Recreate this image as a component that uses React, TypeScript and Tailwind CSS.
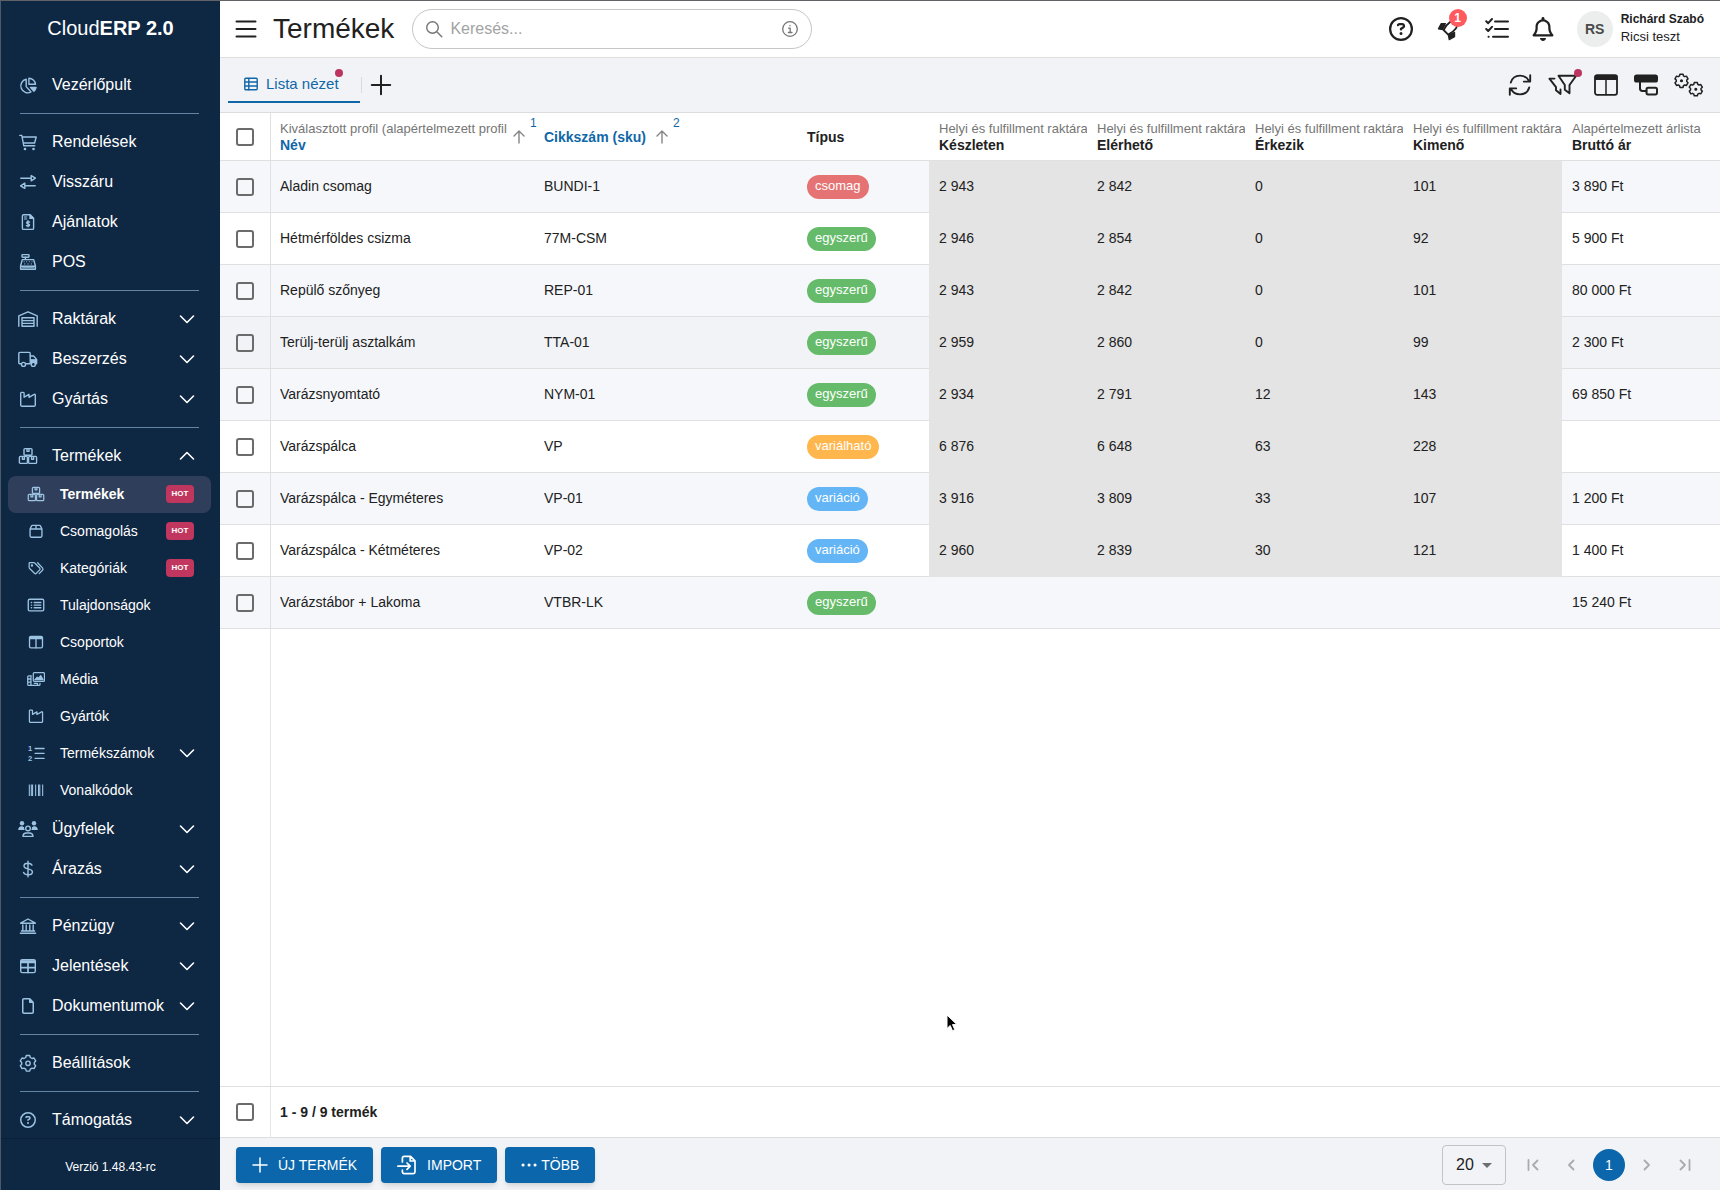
import type { ReactNode } from 'react';
import { FaRegBell, FaRegCircleQuestion, FaRegFile } from 'react-icons/fa6';

const Svg = ({ children, className = 'w-5 h-5', viewBox = '0 0 20 20', width = 1.4 }: { children: ReactNode; className?: string; viewBox?: string; width?: number }) => (
  <svg
    viewBox={viewBox}
    className={`shrink-0 ${className}`}
    fill="none"
    stroke="currentColor"
    strokeWidth={width}
    strokeLinecap="round"
    strokeLinejoin="round"
    aria-hidden="true"
  >
    {children}
  </svg>
);

// toothed ring around a centre point
const gearPath = (cx: number, cy: number, outer: number, inner: number, teeth: number) => {
  const points: string[] = [];
  for (let i = 0; i < teeth; i++) {
    [[-0.22, outer], [0.22, outer], [0.36, inner], [0.64, inner]].forEach(([offset, r]) => {
      const angle = ((i + offset) / teeth) * Math.PI * 2 - Math.PI / 2;
      points.push(`${(cx + r * Math.cos(angle)).toFixed(2)} ${(cy + r * Math.sin(angle)).toFixed(2)}`);
    });
  }
  return `M${points.join('L')}z`;
};

const icons = {
  pie: (
    <Svg>
      <path d="M8.2 4.2A6.9 6.9 0 1 0 13 17L8.2 11.6z" />
      <path d="M10.9 3.2v6h6.6a6.6 6.6 0 0 0-6.6-6z" />
      <path d="M12.4 12.4h5.7a7 7 0 0 1-2.2 3.8z" fill="currentColor" />
    </Svg>
  ),
  cart: (
    <Svg>
      <path d="M1.8 3.4h2l2 10.4h11M4.4 5h13.8l-1.6 6H5.4" />
      <circle cx="7" cy="17" r="1.3" fill="currentColor" stroke="none" />
      <circle cx="15.5" cy="17" r="1.3" fill="currentColor" stroke="none" />
    </Svg>
  ),
  returns: (
    <Svg>
      <path d="M2.8 6.2h10.4M13.2 3.6v5.2l4.2-2.6zM17.2 13.8H6.8M6.8 11.2v5.2l-4.2-2.6z" />
    </Svg>
  ),
  invoice: (
    <Svg>
      <path d="M5.6 2.8h6.6l3.4 3.4v10a1.2 1.2 0 0 1-1.2 1.2H5.6a1.2 1.2 0 0 1-1.2-1.2V4a1.2 1.2 0 0 1 1.2-1.2z" />
      <path d="M6.4 5h2.4M6.4 7h2.4" strokeWidth="1" />
      <path d="M11.6 10.1c-.4-.5-3-.8-3 .6 0 1.5 3 .8 3 2.3 0 1.4-2.6 1.2-3.2.5M10 8.8v6" />
      <path d="M12 3v3.4h3.4z" fill="currentColor" />
    </Svg>
  ),
  register: (
    <Svg>
      <rect x="4" y="2.6" width="7" height="2.6" rx=".6" />
      <path d="M7.4 5.2v2.2M4.3 7.6h11.4l1.7 6.2v3.4H2.6v-3.4zM2.8 14.2h14.4" />
      <path d="M6 9.7h.1M8.6 9.7h.1M11.3 9.7h.1M14 9.7h.1M6.8 11.9h.1M10 11.9h.1M13.2 11.9h.1M4 15.8h12" strokeWidth="1.1" />
    </Svg>
  ),
  warehouse: (
    <Svg>
      <path d="M.8 17.3V6.9L10 2.8l9.2 4.1v10.4M4 17.3V8.8h12v8.5zM4 11.6h12M4 14.4h12" />
    </Svg>
  ),
  truck: (
    <Svg>
      <path d="M3.4 14.8H1.8a1 1 0 0 1-1-1V4.4a1 1 0 0 1 1-1h9.4a1 1 0 0 1 1 1v10.4H7.8" />
      <path d="M12.2 7h3.4l3 3.4v4.4h-1M12.8 11h5.6v3.2" />
      <path d="M13 11.2h5.4v2.6l-2.8-1-2.6 1.4z" fill="currentColor" />
      <circle cx="5.5" cy="15.4" r="2" />
      <circle cx="15.3" cy="15.4" r="2" />
    </Svg>
  ),
  factory: (
    <Svg>
      <path d="M2.7 16V4.2a.8.8 0 0 1 .8-.8h1.8a.8.8 0 0 1 .8.8v4L11 5.4v2.9l5.2-2.9a.7.7 0 0 1 1.1.6v10a1.2 1.2 0 0 1-1.2 1.2H3.9A1.2 1.2 0 0 1 2.7 16z" />
    </Svg>
  ),
  boxes: (
    <Svg>
      <rect x="6" y="2.6" width="8" height="6.6" rx="1" />
      <rect x="1.4" y="10.4" width="8" height="7" rx="1" />
      <rect x="10.6" y="10.4" width="8" height="7" rx="1" />
      <path d="M9 2.8v2.6h2V2.8M4.4 10.6v2.6h2v-2.6M13.6 10.6v2.6h2v-2.6" />
    </Svg>
  ),
  box: (
    <Svg width={1.5}>
      <path d="M3.4 7.8h13.2v7.6a1.5 1.5 0 0 1-1.5 1.5H4.9a1.5 1.5 0 0 1-1.5-1.5zM3.4 7.8l1.7-3.5a1.2 1.2 0 0 1 1-.6h7.8a1.2 1.2 0 0 1 1 .6l1.7 3.5M10 3.8v4" />
    </Svg>
  ),
  tags: (
    <Svg>
      <path d="M2.4 4.8v4.6a1.5 1.5 0 0 0 .5 1.1l5.4 5.4a1.5 1.5 0 0 0 2.1 0l3.7-3.8a1.5 1.5 0 0 0 0-2.1L8.6 4.5a1.5 1.5 0 0 0-1.1-.5H3.2a.8.8 0 0 0-.8.8z" />
      <path d="M11.8 4.2l5.4 5.6a2 2 0 0 1 0 2.7l-3.6 3.7" />
      <circle cx="5.5" cy="7.2" r=".6" fill="currentColor" />
    </Svg>
  ),
  listBox: (
    <Svg width={1.5}>
      <rect x="1.4" y="3.6" width="17.2" height="13" rx="1.6" />
      <path d="M8 7.2h7.4M8 10.1h7.4M8 13h7.4M4.8 7.2h.3M4.8 10.1h.3M4.8 13h.3" />
    </Svg>
  ),
  columns: (
    <Svg width={1.5}>
      <rect x="2.8" y="3.8" width="14.4" height="12.8" rx="1.6" />
      <path d="M3 5h14M3 6.2h14M10 6.4v10" />
    </Svg>
  ),
  media: (
    <Svg>
      <rect x="7" y="2.8" width="12.4" height="9.8" rx="1.2" />
      <path d="M8.8 10.8l2.6-2.8 1.4 1.4 2.4-3.2 2.6 4.6z" fill="currentColor" />
      <path d="M4.8 6.4H2a1.2 1.2 0 0 0-1.2 1.2V16A1.2 1.2 0 0 0 2 17.2h11.2a1.2 1.2 0 0 0 1.2-1.2v-1.2M4.4 6.4V17M1 10h3M1 13.6h3M8 14.8h3.6v2.4" />
    </Svg>
  ),
  numbers: (
    <Svg>
      <path d="M9 5h10M9 10.5h10M9 16h10" />
      <text x="1" y="8" fontSize="8.5" fontWeight="700" fill="currentColor" stroke="none">1</text>
      <text x="1" y="18.5" fontSize="8.5" fontWeight="700" fill="currentColor" stroke="none">2</text>
    </Svg>
  ),
  barcode: (
    <Svg width={1.2}>
      <path d="M2.6 3.8v13M4.8 3.8v13M6.2 3.8v13M9.6 3.8v13M12.8 3.8v13M14.2 3.8v13M17.4 3.8v13" strokeLinecap="butt" />
    </Svg>
  ),
  users: (
    <Svg>
      <g fill="currentColor" stroke="none">
        <circle cx="4" cy="4.2" r="2.2" />
        <circle cx="16" cy="4.2" r="2.2" />
        <path d="M.2 11c0-2.200 1.400-3.800 3.200-3.800 1 0 2.200.3 2.800 1.200-.2 1 0 1.800.6 2.600zM19.800 11c0-2.200-1.400-3.800-3.200-3.800-1 0-2.200.3-2.800 1.200.2 1 0 1.800-.6 2.600z" />
      </g>
      <circle cx="10" cy="9.400" r="2.300" />
      <path d="M5 17.400c0-2.200 1.600-3.400 3.600-3.400h2.800c2 0 3.600 1.200 3.600 3.400z" />
    </Svg>
  ),
  dollar: (
    <Svg>
      <path d="M10 2.200v15.600M14 6.200C13.200 4.700 11.800 4.200 10 4.200 7.800 4.200 6 5.100 6 6.900c0 4 8.400 1.900 8.400 6.100 0 1.900-2 2.800-4.200 2.800-2.300 0-3.900-.8-4.600-2.300" />
    </Svg>
  ),
  bank: (
    <Svg>
      <path d="M2.600 7.200L10 3l7.400 4.200zM4.800 9v5.400M8.200 9v5.400M11.800 9v5.400M15.200 9v5.400M3.400 15h13.200M2.400 17.300h15.200" />
    </Svg>
  ),
  report: (
    <Svg>
      <rect x="2.700" y="3.800" width="14.600" height="12.800" rx="1.600" />
      <path d="M3 5h14M3 6.400h14M3 11.700h14M10 7v9.400" strokeWidth="1.700" />
    </Svg>
  ),
  file: <FaRegFile className="h-4 w-5 shrink-0" />,
  gear: (
    <Svg>
      <path d="M8.300 2.500h3.400l.6 2 1.700 1 2-.5 1.700 2.900-1.400 1.500v1.800l1.400 1.500-1.700 2.900-2-.5-1.700 1-.6 2H8.300l-.6-2-1.700-1-2 .5-1.700-2.900 1.400-1.500V9.400L2.300 7.900 4 5l2 .5 1.700-1z" />
      <circle cx="10" cy="10.300" r="2.200" />
    </Svg>
  ),
  help: <FaRegCircleQuestion className="h-4 w-5 shrink-0" />,
};

type MenuItem = { label: string; icon: keyof typeof icons; chevron?: 'down' | 'up'; hot?: boolean; active?: boolean; children?: MenuItem[] };

const menu: MenuItem[][] = [
  [{ label: 'Vezérlőpult', icon: 'pie' }],
  [
    { label: 'Rendelések', icon: 'cart' },
    { label: 'Visszáru', icon: 'returns' },
    { label: 'Ajánlatok', icon: 'invoice' },
    { label: 'POS', icon: 'register' },
  ],
  [
    { label: 'Raktárak', icon: 'warehouse', chevron: 'down' },
    { label: 'Beszerzés', icon: 'truck', chevron: 'down' },
    { label: 'Gyártás', icon: 'factory', chevron: 'down' },
  ],
  [
    {
      label: 'Termékek',
      icon: 'boxes',
      chevron: 'up',
      children: [
        { label: 'Termékek', icon: 'boxes', hot: true, active: true },
        { label: 'Csomagolás', icon: 'box', hot: true },
        { label: 'Kategóriák', icon: 'tags', hot: true },
        { label: 'Tulajdonságok', icon: 'listBox' },
        { label: 'Csoportok', icon: 'columns' },
        { label: 'Média', icon: 'media' },
        { label: 'Gyártók', icon: 'factory' },
        { label: 'Termékszámok', icon: 'numbers', chevron: 'down' },
        { label: 'Vonalkódok', icon: 'barcode' },
      ],
    },
    { label: 'Ügyfelek', icon: 'users', chevron: 'down' },
    { label: 'Árazás', icon: 'dollar', chevron: 'down' },
  ],
  [
    { label: 'Pénzügy', icon: 'bank', chevron: 'down' },
    { label: 'Jelentések', icon: 'report', chevron: 'down' },
    { label: 'Dokumentumok', icon: 'file', chevron: 'down' },
  ],
  [{ label: 'Beállítások', icon: 'gear' }],
  [{ label: 'Támogatás', icon: 'help', chevron: 'down' }],
];

const pillColors = {
  csomag: 'bg-[#e57373]',
  egyszerű: 'bg-[#66bb6a]',
  variálható: 'bg-[#ffb74d]',
  variáció: 'bg-[#64b5f6]',
};

type Product = { name: string; sku: string; type: keyof typeof pillColors; stock: string[]; price: string; hover?: boolean };

const products: Product[] = [
  { name: 'Aladin csomag', sku: 'BUNDI-1', type: 'csomag', stock: ['2 943', '2 842', '0', '101'], price: '3 890 Ft' },
  { name: 'Hétmérföldes csizma', sku: '77M-CSM', type: 'egyszerű', stock: ['2 946', '2 854', '0', '92'], price: '5 900 Ft' },
  { name: 'Repülő szőnyeg', sku: 'REP-01', type: 'egyszerű', stock: ['2 943', '2 842', '0', '101'], price: '80 000 Ft' },
  { name: 'Terülj-terülj asztalkám', sku: 'TTA-01', type: 'egyszerű', stock: ['2 959', '2 860', '0', '99'], price: '2 300 Ft', hover: true },
  { name: 'Varázsnyomtató', sku: 'NYM-01', type: 'egyszerű', stock: ['2 934', '2 791', '12', '143'], price: '69 850 Ft' },
  { name: 'Varázspálca', sku: 'VP', type: 'variálható', stock: ['6 876', '6 648', '63', '228'], price: '' },
  { name: 'Varázspálca - Egyméteres', sku: 'VP-01', type: 'variáció', stock: ['3 916', '3 809', '33', '107'], price: '1 200 Ft' },
  { name: 'Varázspálca - Kétméteres', sku: 'VP-02', type: 'variáció', stock: ['2 960', '2 839', '30', '121'], price: '1 400 Ft' },
  { name: 'Varázstábor + Lakoma', sku: 'VTBR-LK', type: 'egyszerű', stock: [], price: '15 240 Ft' },
];

const stockColumns = ['Készleten', 'Elérhető', 'Érkezik', 'Kimenő'];

const Chevron = ({ dir }: { dir: 'down' | 'up' }) => (
  <Svg className="w-4 h-4 text-white" viewBox="0 0 16 16" width={1.6}>
    <path d={dir === 'down' ? 'M1.5 5L8 11.5 14.5 5' : 'M1.5 11L8 4.5 14.5 11'} />
  </Svg>
);

function NavItem({ item, sub }: { item: MenuItem; sub?: boolean }) {
  return (
    <li>
      <a
        href="#"
        className={`ml-[7px] mr-[9px] flex items-center pr-4 ${sub ? 'h-[37px] rounded-lg pb-0.5 pl-[19px] text-sm' : 'h-10 pl-[10px] text-base'} ${item.active ? 'bg-[#2f3f5b] font-bold' : ''}`}
      >
        <span className={`flex justify-center text-[#9cc3e2] ${sub ? 'mr-[15px] w-[18px] [&>svg]:h-[18px] [&>svg]:w-[18px]' : 'mr-[14px] w-5'}`}>{icons[item.icon]}</span>
        <span className="flex-1 whitespace-nowrap">{item.label}</span>
        {item.hot && <span className="mr-px flex h-[18px] w-7 items-center justify-center rounded bg-[#c0365f] text-[8px] font-bold">HOT</span>}
        {item.chevron && <Chevron dir={item.chevron} />}
      </a>
      {item.children && (
        <ul>
          {item.children.map((child) => (
            <NavItem key={child.label} item={child} sub />
          ))}
        </ul>
      )}
    </li>
  );
}

function Sidebar() {
  return (
    <aside className="sticky top-0 flex h-[calc(100vh-1px)] w-[219px] shrink-0 flex-col bg-[#0e2743] text-white">
      <div className="flex h-16 shrink-0 items-center justify-center pb-[10px] text-xl">
        <span>
          Cloud<b>ERP 2.0</b>
        </span>
      </div>
      <nav className="min-h-0 flex-1 overflow-hidden">
        {menu.map((group, idx) => (
          <ul key={idx} className={idx > 0 ? 'before:my-2 before:ml-[19px] before:mr-[21px] before:block before:h-px before:bg-[#6384a3]' : ''}>
            {group.map((item) => (
              <NavItem key={item.label} item={item} />
            ))}
          </ul>
        ))}
      </nav>
      <div className="flex h-[52px] shrink-0 items-center justify-center border-t border-[#0b2038] pt-1 text-xs">Verzió 1.48.43-rc</div>
    </aside>
  );
}

const IconButton = ({ label, children, className = '' }: { label: string; children: ReactNode; className?: string }) => (
  <button type="button" aria-label={label} className={`relative flex shrink-0 items-center justify-center ${className}`}>
    {children}
  </button>
);

function Header() {
  return (
    <header className="flex h-[57px] shrink-0 items-center border-b border-[#dfdfdf] bg-white pl-[14px] pr-4">
      <IconButton label="Menü" className="mr-[15px]">
        <Svg className="h-6 w-6" viewBox="0 0 24 24" width={2}>
          <path d="M2.5 4.5h19M2.5 12h19M2.5 19.5h19" />
        </Svg>
      </IconButton>
      <h1 className="text-[28px] leading-9">Termékek</h1>
      <div className="ml-[18px] flex h-10 w-[400px] items-center rounded-full border border-[#c6c6c6] px-3">
        <Svg className="h-[18px] w-[18px] text-[#757575]" viewBox="0 0 18 18" width={1.4}>
          <circle cx="7.5" cy="7.5" r="5.8" />
          <path d="M12 12l4.8 4.8" />
        </Svg>
        <input aria-label="Keresés" placeholder="Keresés..." className="ml-[7px] min-w-0 flex-1 bg-transparent text-base outline-none placeholder:text-[#a3a3a3]" />
        <Svg className="h-[18px] w-[18px] text-[#757575]" viewBox="0 0 18 18" width={1.3}>
          <circle cx="9" cy="9" r="7.3" />
          <path d="M7.6 8.2H9.2v4.2M7.4 12.5H11M9 5.4v.3" />
        </Svg>
      </div>
      <div className="ml-auto flex items-center">
        <IconButton label="Súgó" className="mr-6">
          <FaRegCircleQuestion className="h-6 w-6" />
        </IconButton>
        <IconButton label="Újdonságok" className="mr-6">
          <Svg className="h-6 w-6" viewBox="0 0 24 24" width={1.8}>
            <path d="M6.6 13C9.600 6.800 14.500 2.500 22 2c-.4 7.500-4.500 12.500-10.800 15.600z" />
            <path d="M8.400 6.600H4.200L1.400 11.800l4.200.8zM17.600 15.400v4.400l-5.400 2.800-.8-4.200z" fill="currentColor" strokeWidth="1.200" />
          </Svg>
          <span className="absolute -top-2 -right-1.5 flex h-[18px] w-[18px] items-center justify-center rounded-full bg-[#ff5a5f] text-xs font-bold text-white">1</span>
        </IconButton>
        <IconButton label="Feladatok" className="mr-[22px]">
          <Svg className="h-6 w-6" viewBox="0 0 24 24" width={2}>
            <path d="M10 4.5h13M10 12h13M8 19.8h15M1.2 4.2l2 2L7 2M1.2 12l2 2L7 9.8M3.5 19.8h.2" />
          </Svg>
        </IconButton>
        <IconButton label="Értesítések" className="mr-[22px]">
          <FaRegBell className="h-6 w-6" />
        </IconButton>
        <span className="flex h-9 w-9 items-center justify-center rounded-full bg-[#eceeed] text-sm font-bold text-[#4a4a4a]">RS</span>
        <div className="ml-2 pb-0.5 whitespace-nowrap">
          <div className="text-xs leading-[18px] font-bold">Richárd Szabó</div>
          <div className="text-[13px] leading-[18px]">Ricsi teszt</div>
        </div>
      </div>
    </header>
  );
}

function Toolbar() {
  return (
    <div className="flex h-[55px] shrink-0 items-center justify-between border-b border-[#dcdcdc] bg-[#f1f3f7] pl-2 pr-4">
      <div className="flex items-center">
        <button type="button" className="relative flex h-9 items-center border-b-2 border-[#1067a8] pr-[21px] pl-4 text-[15px] whitespace-nowrap text-[#1067a8]">
          <Svg className="mr-2 h-[14px] w-[14px]" viewBox="0 0 14 14">
            <rect x=".8" y="1.2" width="12.4" height="11.6" rx="1" />
            <path d="M1 5h12M1 9h12M4.8 1.4v11.4" />
          </Svg>
          Lista nézet
          <span className="absolute top-0.5 right-[17px] h-2 w-2 rounded-full bg-[#bb3560]" />
        </button>
        <span className="ml-px h-4 w-px bg-[#d8dadd]" />
        <IconButton label="Új nézet" className="ml-[7px]">
          <Svg className="h-6 w-6" viewBox="0 0 24 24" width={2}>
            <path d="M12 2.8v18.4M2.8 12h18.4" />
          </Svg>
        </IconButton>
      </div>
      <div className="flex items-center gap-4">
        <IconButton label="Frissítés">
          <Svg className="h-6 w-6" viewBox="0 0 24 24" width={1.9}>
            <path d="M2.8 9.6C4 5.2 7.4 2.6 12 2.6c4 0 7.2 2 9 5.4M22.2 2.2v6.4h-6.4M21.2 14.4c-1.200 4.400-4.600 7-9.200 7-4 0-7.200-2-9-5.400M1.800 21.800v-6.400h6.400" />
          </Svg>
        </IconButton>
        <IconButton label="Szűrők">
          <Svg className="h-6 w-[30px]" viewBox="0 0 30 24" width={1.9}>
            <path d="M10.5 2.7h17.7L21.500 12v8.300l-4.700-3.500V12zM6.500 5.600H1.400L8 14.200v3l4.500 3.800v-4.600" />
          </Svg>
          <span className="absolute -top-1 -right-1 h-2 w-2 rounded-full bg-[#bb3560]" />
        </IconButton>
        <IconButton label="Oszlopok">
          <Svg className="h-6 w-6" viewBox="0 0 24 24" width={1.8}>
            <rect x="1" y="2.2" width="22" height="19.6" rx="2" />
            <path d="M12 6v15.5" strokeWidth="1.5" />
            <path d="M1.5 3h21v3h-21z" fill="currentColor" />
          </Svg>
        </IconButton>
        <IconButton label="Csoportosítás">
          <Svg className="h-6 w-6" viewBox="0 0 24 24" width={2}>
            <rect x="1" y="2.5" width="22" height="6" rx="1.6" fill="currentColor" />
            <rect x="12.5" y="14.8" width="10.5" height="6.6" rx="1.6" />
            <path d="M6 9v6.5c0 1.6.8 2.4 2.4 2.4h4" />
          </Svg>
        </IconButton>
        <IconButton label="Beállítások">
          <Svg className="h-6 w-[30px]" viewBox="0 0 30 24" width={1.5}>
            <path d={gearPath(7.5, 7.8, 6.8, 5.3, 6)} />
            <path d={gearPath(21.8, 16.2, 6.8, 5.3, 6)} />
            <circle cx="7.5" cy="7.8" r=".8" fill="currentColor" />
            <circle cx="21.8" cy="16.2" r=".8" fill="currentColor" />
          </Svg>
        </IconButton>
      </div>
    </div>
  );
}

const Checkbox = ({ label }: { label: string }) => (
  <input type="checkbox" aria-label={label} className="block h-[18px] w-[18px] shrink-0 appearance-none rounded-[3px] border-2 border-[#6b6b6b] bg-transparent" />
);

const SortArrow = () => (
  <Svg className="h-4 w-4 text-[#858585]" viewBox="0 0 16 16">
    <path d="M8 14V2M3 7l5-5 5 5" />
  </Svg>
);

const HeadLabel = ({ caption, title, blue }: { caption: string; title: string; blue?: boolean }) => (
  <span className="block min-w-0 overflow-hidden whitespace-nowrap">
    <span className="block text-[13px] leading-4 font-normal text-[#757575]">{caption}</span>
    <span className={`block text-sm leading-4 ${blue ? 'text-[#1067a8]' : ''}`}>{title}</span>
  </span>
);

function ProductTable() {
  return (
    <table className="w-full table-fixed border-separate border-spacing-0 text-sm text-[#212121]">
      <colgroup>
        <col className="w-[51px]" />
        <col className="w-[263px]" />
        <col className="w-[264px]" />
        <col className="w-[131px]" />
        <col className="w-[158px]" />
        <col className="w-[158px]" />
        <col className="w-[158px]" />
        <col className="w-[159px]" />
        <col />
      </colgroup>
      <thead>
        <tr className="h-12 text-left *:border-b *:border-[#e0e0e0]">
          <th className="border-r pl-4">
            <Checkbox label="Összes kijelölése" />
          </th>
          <th className="pl-[9px] align-middle">
            <span className="flex items-center">
              <span className="w-[227px] shrink-0">
                <HeadLabel caption="Kiválasztott profil (alapértelmezett profil" title="Név" blue />
              </span>
              <span className="ml-1">
                <SortArrow />
              </span>
              <sup className="mb-4 ml-[3px] text-xs font-normal text-[#1067a8]">1</sup>
            </span>
          </th>
          <th className="pl-[10px]">
            <span className="flex items-center text-[#1067a8]">
              Cikkszám (sku)
              <span className="ml-2">
                <SortArrow />
              </span>
              <sup className="mb-4 ml-[3px] text-xs font-normal">2</sup>
            </span>
          </th>
          <th className="pl-[9px]">Típus</th>
          {stockColumns.map((title) => (
            <th key={title} className="pl-[10px]">
              <HeadLabel caption="Helyi és fulfillment raktára" title={title} />
            </th>
          ))}
          <th className="pl-[10px]">
            <HeadLabel caption="Alapértelmezett árlista" title="Bruttó ár" />
          </th>
        </tr>
      </thead>
      <tbody>
        {products.map((product, idx) => (
          <tr
            key={product.name}
            className={`h-[52px] [&>td]:border-b ${product.hover ? 'bg-[#f1f3f6]' : idx % 2 === 0 ? 'bg-[#f5f7fb]' : 'bg-white'}`}
          >
            <td className="border-r border-[#e0e0e0] pl-4">
              <Checkbox label={product.name} />
            </td>
            <td className="border-[#e0e0e0] pb-px pl-[9px]">{product.name}</td>
            <td className="border-[#e0e0e0] pb-px pl-[10px]">{product.sku}</td>
            <td className="border-[#e0e0e0] pl-[9px]">
              <span className={`flex h-6 w-fit items-center rounded-full px-2 text-[13px] text-white ${pillColors[product.type]}`}>{product.type}</span>
            </td>
            {stockColumns.map((title, i) => (
              <td key={title} className={`pb-px pl-[10px] ${product.stock.length ? 'border-[#e4e4e4] bg-[#e4e4e4]' : 'border-[#e0e0e0]'}`}>
                {product.stock[i]}
              </td>
            ))}
            <td className="border-[#e0e0e0] pb-px pl-[10px]">{product.price}</td>
          </tr>
        ))}
      </tbody>
    </table>
  );
}

const primaryButton = 'flex h-9 items-center rounded bg-[#0b66ab] px-4 text-sm whitespace-nowrap text-white shadow-md';

function ActionBar() {
  return (
    <footer className="flex h-[53px] shrink-0 items-center justify-between border-t border-[#dcdee1] bg-[#f1f3f7] pr-[19px] pl-4 pt-0.5">
      <div className="flex gap-2">
        <button type="button" className={primaryButton}>
          <Svg className="mr-[10px] h-4 w-4" viewBox="0 0 16 16" width={1.5}>
            <path d="M8 1v14M1 8h14" />
          </Svg>
          ÚJ TERMÉK
        </button>
        <button type="button" className={primaryButton}>
          <Svg className="mr-[10px] h-5 w-5" width={1.7}>
            <path d="M5.4 7V3A1.6 1.6 0 0 1 7 1.4h6.6L18 5.8V17a1.6 1.6 0 0 1-1.6 1.6H7A1.6 1.6 0 0 1 5.4 17v-1.8M.9 11.2h12M10 8l3.2 3.2-3.2 3.2M13.2 1.6V6h4.6" />
          </Svg>
          IMPORT
        </button>
        <button type="button" className={primaryButton}>
          <Svg className="mr-1 h-4 w-4" viewBox="0 0 16 16" width={3}>
            <path d="M2 8h.1M8 8h.1M14 8h.1" />
          </Svg>
          TÖBB
        </button>
      </div>
      <div className="flex items-center">
        <div className="relative mr-[11px]">
          <select aria-label="Sorok száma" className="h-10 w-16 appearance-none rounded border border-[#c1c3c6] bg-transparent pl-[13px] text-base">
            <option>20</option>
          </select>
          <svg viewBox="0 0 10 5" className="pointer-events-none absolute right-[14px] top-[18px] h-[5px] w-[10px] text-[#6f6f6f]" aria-hidden="true">
            <path d="M0 0h10L5 5z" fill="currentColor" />
          </svg>
        </div>
        <nav aria-label="Lapozás" className="flex gap-1.5 *:flex *:h-8 *:w-8 *:items-center *:justify-center *:rounded-full">
          <button type="button" aria-label="Első oldal" className="text-[#a9abae]">
            <Svg className="h-3 w-3" viewBox="0 0 12 12" width={1.8}>
              <path d="M1.5 1v10M10.5 1.5L6 6l4.5 4.5" />
            </Svg>
          </button>
          <button type="button" aria-label="Előző oldal" className="text-[#a9abae]">
            <Svg className="h-3 w-3" viewBox="0 0 12 12" width={1.8}>
              <path d="M8.5 1.5L4 6l4.5 4.5" />
            </Svg>
          </button>
          <button type="button" className="bg-[#0b66ab] text-sm text-white">
            1
          </button>
          <button type="button" aria-label="Következő oldal" className="text-[#a9abae]">
            <Svg className="h-3 w-3" viewBox="0 0 12 12" width={1.8}>
              <path d="M3.5 1.5L8 6l-4.5 4.5" />
            </Svg>
          </button>
          <button type="button" aria-label="Utolsó oldal" className="text-[#a9abae]">
            <Svg className="h-3 w-3" viewBox="0 0 12 12" width={1.8}>
              <path d="M1.5 1.5L6 6l-4.5 4.5M10.5 1v10" />
            </Svg>
          </button>
        </nav>
      </div>
    </footer>
  );
}

export default function App() {
  return (
    <div className="relative flex min-h-screen border-t border-l border-t-[#626266] border-l-[#4a5a6c] bg-white font-['Liberation_Sans',Arial,sans-serif] text-[#212121]">
      <Sidebar />
      <main className="flex min-w-0 flex-1 flex-col">
        <Header />
        <Toolbar />
        <ProductTable />
        <div className="w-[51px] flex-1 border-r border-[#e6e6e6]" />
        <div className="flex h-[51px] shrink-0 items-stretch border-t border-[#e0dede]">
          <div className="flex w-[51px] items-center border-r border-[#e6e6e6] pl-4">
            <Checkbox label="Oldal kijelölése" />
          </div>
          <span className="self-center pl-[9px] text-sm font-bold">1 - 9 / 9 termék</span>
        </div>
        <ActionBar />
      </main>
      <svg viewBox="0 0 12 18" className="absolute left-[945px] top-[1013px] h-[18px] w-3" aria-hidden="true">
        <path d="M1 1v13.5l3.2-3 2.3 5.2 2.3-1-2.3-5.1h4.4z" fill="#000" stroke="#fff" strokeWidth="1" />
      </svg>
    </div>
  );
}
